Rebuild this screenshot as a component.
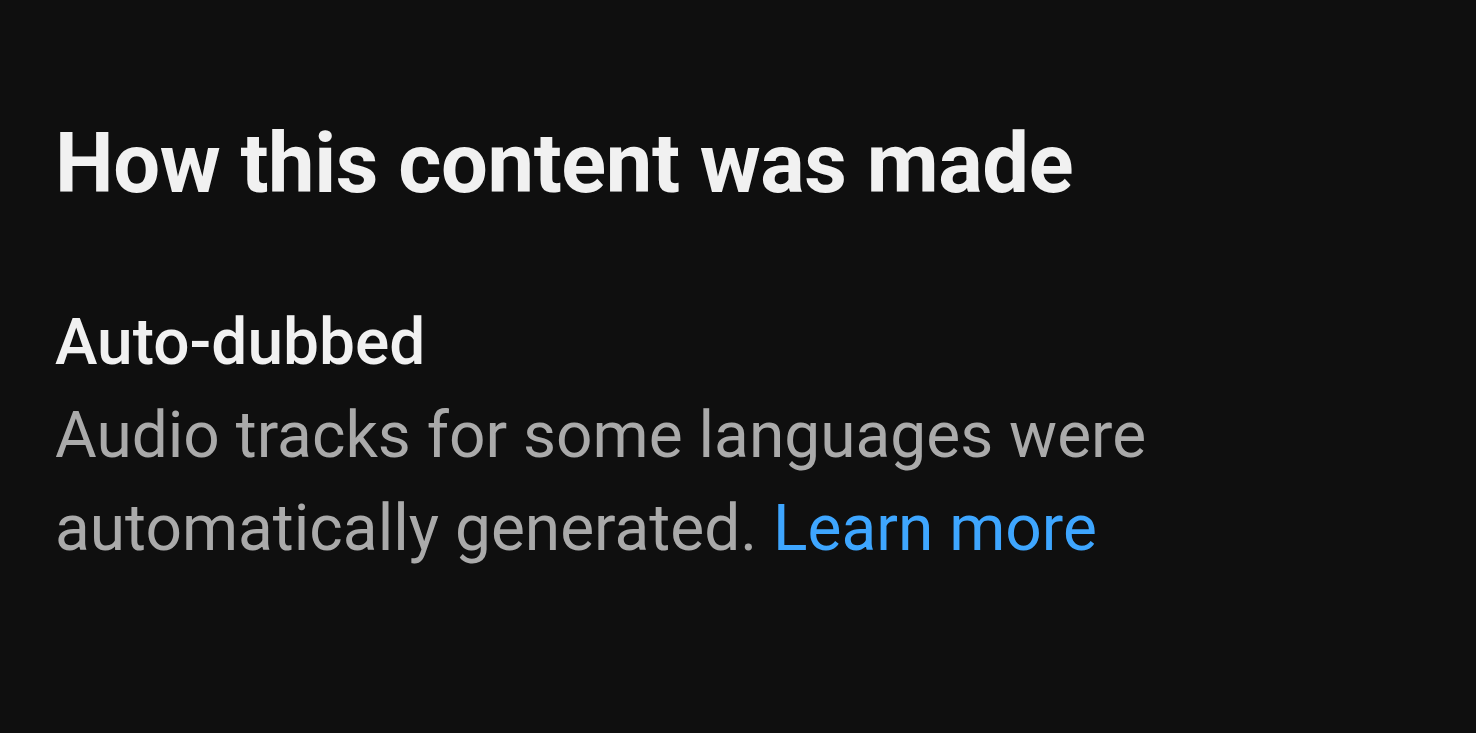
export default function App() {
  return (
    <div
      className="w-[1476px] h-[733px] bg-[#0f0f0f] overflow-hidden pl-[55px] pt-[114px]"
      style={{ fontFamily: 'Roboto, "Noto Sans", sans-serif' }}
    >
      <h1 className="text-[83px] leading-[100px] font-bold text-[#f1f1f1] tracking-[-0.4px]">
        How this content was made
      </h1>
      <div className="mt-[83px]">
        <h2 className="text-[64px] leading-[92px] font-medium text-[#f1f1f1]">Auto-dubbed</h2>
        <p className="text-[64px] leading-[93px] text-[#aaaaaa] w-[1160px]">
          Audio tracks for some languages were automatically generated.{' '}
          <span className="text-[#3ea6ff]">Learn more</span>
        </p>
      </div>
    </div>
  );
}
